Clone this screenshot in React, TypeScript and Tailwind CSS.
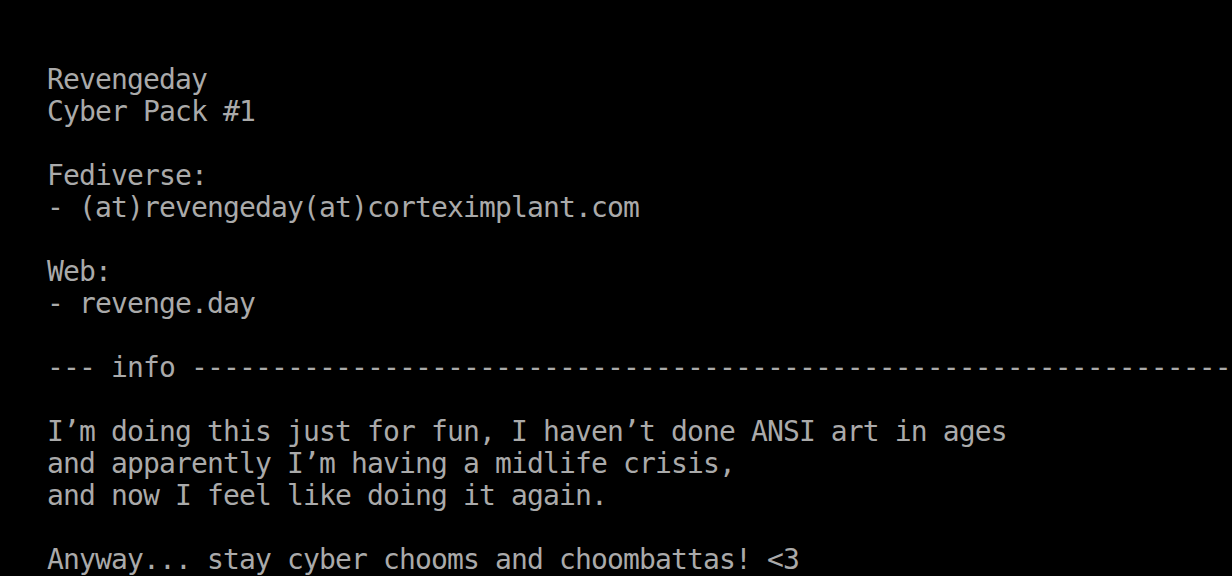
import React from "react";

const lines: string[] = [
  "",
  "",
  "Revengeday",
  "Cyber Pack #1",
  "",
  "Fediverse:",
  "- (at)revengeday(at)corteximplant.com",
  "",
  "Web:",
  "- revenge.day",
  "",
  "--- info " + "-".repeat(65),
  "",
  "I\u2019m doing this just for fun, I haven\u2019t done ANSI art in ages",
  "and apparently I\u2019m having a midlife crisis,",
  "and now I feel like doing it again.",
  "",
  "Anyway... stay cyber chooms and choombattas! <3",
];

export default function App() {
  return (
    <div className="w-[1232px] h-[576px] bg-black overflow-hidden">
      <div
        className="pl-[47px] text-[#aaaaaa] text-[28px] leading-[32px] tracking-[-0.86px] whitespace-pre"
        style={{ fontFamily: '"DejaVu Sans Mono", "Liberation Mono", monospace' }}
      >
        {lines.map((l, i) => (
          <div key={i} className="h-[32px]">
            {l}
          </div>
        ))}
      </div>
    </div>
  );
}
